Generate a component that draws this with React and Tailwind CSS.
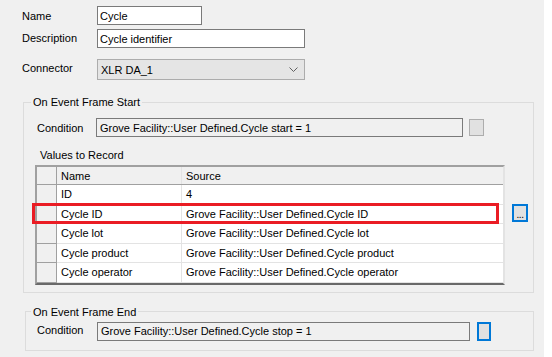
import React from 'react';

const rows = [
  { name: 'ID', source: '4' },
  { name: 'Cycle ID', source: 'Grove Facility::User Defined.Cycle ID', selected: true },
  { name: 'Cycle lot', source: 'Grove Facility::User Defined.Cycle lot' },
  { name: 'Cycle product', source: 'Grove Facility::User Defined.Cycle product' },
  { name: 'Cycle operator', source: 'Grove Facility::User Defined.Cycle operator' },
];

const Chevron = () => (
  <svg width="9" height="6" viewBox="0 0 9 6" className="text-[#606060]">
    <path d="M0.5 0.5 L4.5 4.5 L8.5 0.5" fill="none" stroke="currentColor" strokeWidth="1" />
  </svg>
);

export default function App() {
  return (
    <div className="w-[552px] h-[357px] bg-white font-['Liberation_Sans',Arial,sans-serif] text-[11px] leading-[14px] text-black">
      <div className="w-[544px] h-[357px] bg-[#f0f0f0] pt-[6px]">
        {/* Header fields */}
        <div className="flex items-center h-[19px]">
          <span className="ml-[22px] w-[75px]">Name</span>
          <div className="w-[105px] h-[19px] bg-white border border-[#7a7a7a] px-[2px] flex items-center">Cycle</div>
        </div>
        <div className="flex items-center h-[19px] mt-[4px]">
          <span className="ml-[22px] w-[75px] -mt-[2px]">Description</span>
          <div className="w-[208px] h-[19px] bg-white border border-[#7a7a7a] px-[2px] flex items-center">Cycle identifier</div>
        </div>
        <div className="flex items-center h-[21px] mt-[11px]">
          <span className="ml-[22px] w-[75px] -mt-[4px]">Connector</span>
          <div className="w-[208px] h-[21px] bg-[#e5e5e5] border border-[#acacac] pl-[3px] pr-[6px] flex items-center justify-between">
            <span>XLR DA_1</span>
            <Chevron />
          </div>
        </div>

        {/* On Event Frame Start */}
        <fieldset className="ml-[23px] w-[511px] mt-[15px] border border-[#dcdcdc] pl-[13px] pr-[0px] pb-[7px]">
          <legend className="-ml-[6px] px-[2px] leading-[14px]">On Event Frame Start</legend>
          <div className="flex items-center mt-[9px]">
            <span className="w-[59px] mt-[1px]">Condition</span>
            <div className="w-[367px] h-[19px] bg-[#f0f0f0] border border-[#7a7a7a] px-[3px] flex items-center">
              Grove Facility::User Defined.Cycle start = 1
            </div>
            <div className="ml-[6px] w-[15px] h-[17px] bg-[#e1e1e1] border border-[#adadad]" />
          </div>
          <div className="mt-[11px] ml-[3px]">Values to Record</div>
          <div className="relative mt-[3px] -ml-[2px] w-[470px] border-2 border-t-[#a0a0a0] border-l-[#a0a0a0] border-r-[#e3e3e3] border-b-[#696969] bg-[#f0f0f0]">
            <div className="flex h-[18px] border-b border-[#a0a0a0]">
              <div className="w-[20px] border-r border-[#a0a0a0]" />
              <div className="w-[125px] border-r border-[#e3e3e3] pl-[4px] flex items-center">Name</div>
              <div className="flex-1 pl-[4px] flex items-center">Source</div>
            </div>
            {rows.map((r) => (
              <div key={r.name} className="flex h-[19.5px]">
                <div className="w-[20px] border-r border-b border-[#a0a0a0] bg-[#f0f0f0]" />
                <div className="w-[125px] bg-white border-r border-b border-[#e3e3e3] pl-[4px] flex items-center">{r.name}</div>
                <div className="flex-1 bg-white border-b border-[#e3e3e3] pl-[4px] flex items-center">{r.source}</div>
              </div>
            ))}
            {/* highlight + editor button */}
            <div className="absolute left-[-5px] top-[36px] w-[467px] h-[21px] border-[3px] border-[#ea1c24]" />
            <div className="absolute left-[475px] top-[37px] w-[16px] h-[18px] bg-[#e1e1e1] border-2 border-[#0078d7] flex items-end justify-center pb-[2px]">
              <span className="text-[10px] leading-[6px] tracking-[-0.5px]">...</span>
            </div>
          </div>
        </fieldset>

        {/* On Event Frame End */}
        <fieldset className="ml-[25px] w-[509px] mt-[12px] border border-[#dcdcdc] pl-[11px] pb-[9px]">
          <legend className="-ml-[6px] px-[2px] leading-[14px]">On Event Frame End</legend>
          <div className="flex items-center mt-[3px]">
            <span className="w-[60px] -mt-[3px]">Condition</span>
            <div className="w-[373px] h-[19px] bg-[#f0f0f0] border border-[#7a7a7a] px-[3px] flex items-center">
              Grove Facility::User Defined.Cycle stop = 1
            </div>
            <div className="ml-[7px] w-[14px] h-[19px] bg-[#e1e1e1] border-2 border-[#0078d7]" />
          </div>
        </fieldset>
      </div>
    </div>
  );
}
